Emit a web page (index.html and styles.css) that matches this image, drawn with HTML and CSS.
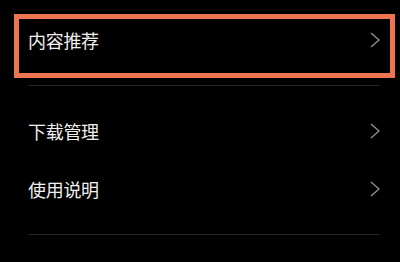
FILE: index.html
```html
<!DOCTYPE html>
<html lang="zh">
<head>
<meta charset="utf-8">
<link rel="stylesheet" href="styles.css">
</head>
<body>
<div class="page">
  <div class="group">
    <div class="row">
      <span class="label">内容推荐</span>
      <svg class="chev" width="10" height="16" viewBox="0 0 10 16"><polyline points="1,1 9,8 1,15" fill="none" stroke="#8c8c8c" stroke-width="1.5"/></svg>
      <div class="highlight"></div>
    </div>
  </div>
  <div class="sep"></div>
  <div class="group">
    <div class="row">
      <span class="label">下载管理</span>
      <svg class="chev" width="10" height="16" viewBox="0 0 10 16"><polyline points="1,1 9,8 1,15" fill="none" stroke="#8c8c8c" stroke-width="1.5"/></svg>
    </div>
    <div class="row">
      <span class="label">使用说明</span>
      <svg class="chev" width="10" height="16" viewBox="0 0 10 16"><polyline points="1,1 9,8 1,15" fill="none" stroke="#8c8c8c" stroke-width="1.5"/></svg>
    </div>
  </div>
  <div class="sep"></div>
</div>
</body>
</html>
```

FILE: styles.css
```css
html, body {
  margin: 0;
  padding: 0;
  background: #000;
}
.page {
  width: 400px;
  height: 262px;
  padding-top: 11px;
  box-sizing: border-box;
  font-family: "Noto Sans CJK SC", "Noto Sans", sans-serif;
  color: #f0f0f0;
  overflow: hidden;
}
.group {
  display: flex;
  flex-direction: column;
}
.row {
  position: relative;
  height: 58px;
  display: flex;
  align-items: center;
  justify-content: space-between;
  padding: 0 20px 0 28px;
}
.label {
  font-size: 18px;
  line-height: 18px;
  letter-spacing: -0.3px;
}
.chev {
  display: block;
}
.highlight {
  position: absolute;
  left: 14px;
  top: 3px;
  width: 381px;
  height: 64px;
  box-sizing: border-box;
  border: 5px solid #ef7550;
}
.sep {
  height: 1px;
  background: #262626;
  margin: 16px 20px 16px 28px;
}
```
